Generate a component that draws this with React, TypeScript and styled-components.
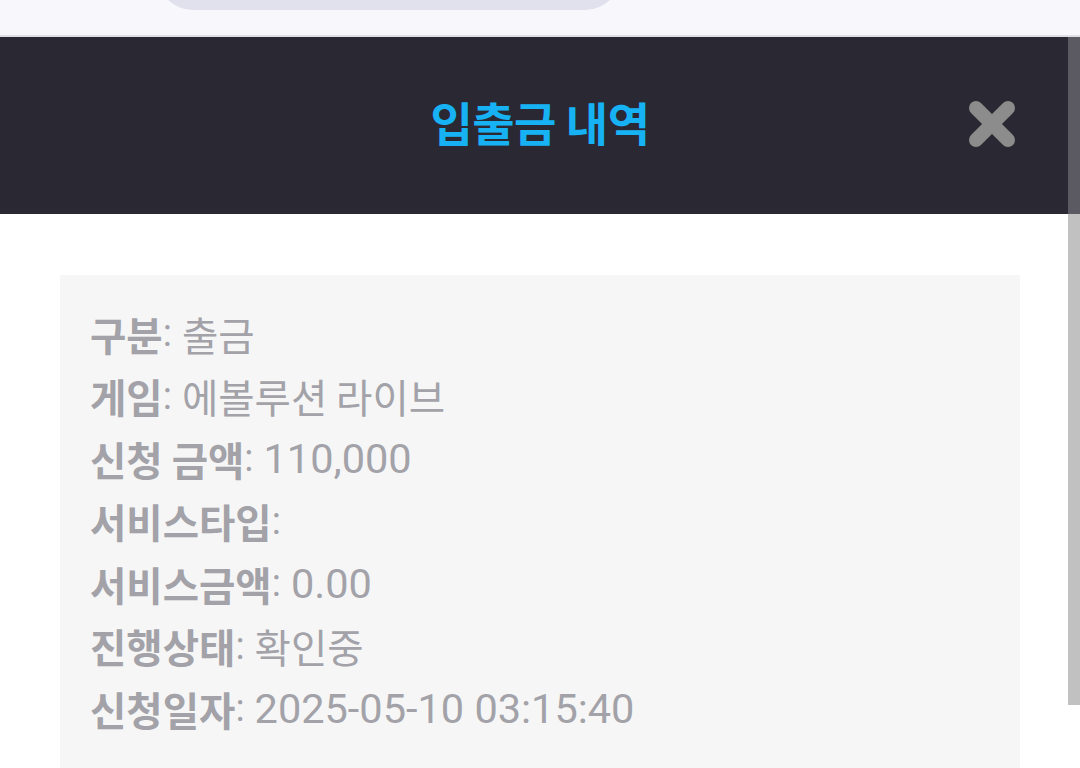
import React from "react";
import styled, { createGlobalStyle } from "styled-components";

const GlobalStyle = createGlobalStyle`
  html, body {
    margin: 0;
    padding: 0;
    background: #ffffff;
    overflow: hidden;
  }
  body {
    font-family: "Roboto", "Noto Sans CJK KR", sans-serif;
  }
`;

const Page = styled.div`
  width: 1080px;
  height: 768px;
  display: flex;
  flex-direction: column;
  overflow: hidden;
`;

const TopBar = styled.div`
  height: 35px;
  flex: none;
  background: #f7f7fc;
  border-bottom: 2px solid #dedee6;
  overflow: hidden;
  display: flex;
  padding-left: 157px;
`;

const SearchPill = styled.div`
  width: 464px;
  height: 60px;
  margin-top: -50px;
  background: #e1e1ed;
  border-radius: 0 0 36px 36px;
`;

const Modal = styled.section`
  position: relative;
  flex: 1;
  display: flex;
  flex-direction: column;
  background: #ffffff;
`;

const Header = styled.header`
  height: 177px;
  flex: none;
  background: #2a2933;
  display: grid;
  grid-template-columns: 1fr auto 1fr;
  align-items: center;
  padding-right: 64px;
  padding-left: 64px;
`;

const Title = styled.h1`
  grid-column: 2;
  margin: 0;
  font-family: "Noto Sans CJK KR", sans-serif;
  font-size: 46px;
  font-weight: 700;
  color: #17b2f3;
  letter-spacing: -0.5px;
  padding-bottom: 9px;
`;

const CloseButton = styled.button`
  grid-column: 3;
  justify-self: end;
  width: 48px;
  height: 48px;
  padding: 0;
  border: none;
  background: none;
  display: flex;
  cursor: pointer;
  margin-bottom: 3px;
`;

const Body = styled.div`
  padding: 61px 60px 0;
`;

const Card = styled.div`
  background: #f6f6f6;
  padding: 27px 30px 40px;
  min-height: 600px;
`;

const Row = styled.div`
  height: 62.5px;
  display: flex;
  align-items: center;
  color: #a2a2a8;
  white-space: pre;
`;

const Label = styled.span`
  font-family: "Noto Sans CJK KR", sans-serif;
  font-size: 39.5px;
  font-weight: 700;
`;

const Colon = styled.span`
  font-family: "Roboto", sans-serif;
  font-size: 38px;
  font-weight: 400;
  margin-right: 10px;
`;

const Hangul = styled.span`
  font-family: "Noto Sans CJK KR", sans-serif;
  font-size: 39.5px;
  font-weight: 400;
`;

const Latin = styled.span`
  font-family: "Roboto", sans-serif;
  font-size: 41.5px;
  font-weight: 400;
`;

const ScrollThumb = styled.div`
  position: absolute;
  top: 0;
  right: 0;
  width: 12px;
  height: 668px;
  background: linear-gradient(#5b5a62 0 177px, #c1c1c1 177px 100%);
`;

const rows: [string, string][] = [
  ["구분", "출금"],
  ["게임", "에볼루션 라이브"],
  ["신청 금액", "110,000"],
  ["서비스타입", ""],
  ["서비스금액", "0.00"],
  ["진행상태", "확인중"],
  ["신청일자", "2025-05-10 03:15:40"],
];

// Hangul and Latin runs use different faces and sizes
function renderValue(value: string) {
  const parts = value.match(/[\uAC00-\uD7A3]+(?: [\uAC00-\uD7A3]+)*|[^\uAC00-\uD7A3]+/g) ?? [];
  return parts.map((p, i) =>
    /[\uAC00-\uD7A3]/.test(p) ? <Hangul key={i}>{p}</Hangul> : <Latin key={i}>{p}</Latin>
  );
}

const CloseIcon = () => (
  <svg width="48" height="48" viewBox="0 0 48 48">
    <path
      d="M8 8 L40 40 M40 8 L8 40"
      stroke="#8c8c8c"
      strokeWidth="14"
      strokeLinecap="round"
      fill="none"
    />
  </svg>
);

export default function App() {
  return (
    <Page>
      <GlobalStyle />
      <TopBar>
        <SearchPill />
      </TopBar>
      <Modal>
        <Header>
          <Title>입출금 내역</Title>
          <CloseButton aria-label="닫기">
            <CloseIcon />
          </CloseButton>
        </Header>
        <Body>
          <Card>
            {rows.map(([label, value]) => (
              <Row key={label}>
                <Label>{label}</Label>
                <Colon>:</Colon>
                {renderValue(value)}
              </Row>
            ))}
          </Card>
        </Body>
        <ScrollThumb />
      </Modal>
    </Page>
  );
}
